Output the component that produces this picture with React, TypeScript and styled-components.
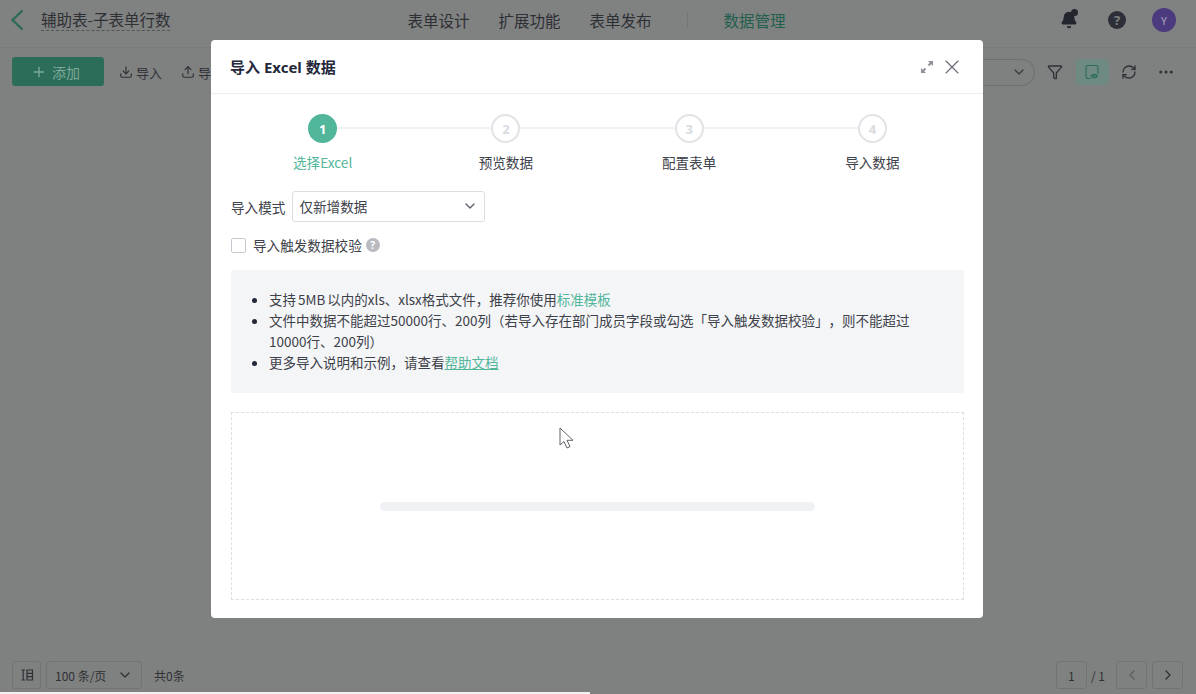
import React from 'react';
import styled, { createGlobalStyle } from 'styled-components';
import { ChevronLeft, ChevronRight, ChevronDown, Plus, Download, Upload, X, Filter, RefreshCw, MoreHorizontal, Bell } from 'lucide-react';

const FONT = `"Noto Sans CJK SC", "Noto Sans", sans-serif`;
const Global = createGlobalStyle`
  html, body { margin: 0; padding: 0; height: 100%; overflow: hidden; }
  body { font-family: ${FONT}; color: #2a2f3c; font-size: 14px; text-spacing-trim: space-all; }
  #root { height: 100%; }
  * { box-sizing: border-box; }
`;

const Page = styled.div`
  position: relative; width: 1196px; height: 694px; overflow: hidden;
  display: flex; flex-direction: column; background: #7f8080;
`;
const Header = styled.header`
  height: 48px; flex: none; display: flex; align-items: center; padding: 0 20px 8px 10px;
  border-bottom: 1px solid #7a7b7b; background: #808181;
`;
const Back = styled.span`color: #2c6b58; display: flex; margin-right: 17px;`;
const Title = styled.span`font-size: 15.5px; line-height: 22px; color: #2f3034; border-bottom: 1px dashed #545555; flex: none;`;
const Nav = styled.nav`flex: 1; display: flex; align-items: center; padding-left: 237px; gap: 29px;`;
const NavItem = styled.span<{ $active?: boolean }>`font-size: 15.5px; color: ${p => p.$active ? '#235f4d' : '#2d2f34'};`;
const NavSep = styled.span`width: 1px; height: 16px; background: #747575; margin: 0 6px 0 7px;`;
const HeaderIcons = styled.div`display: flex; align-items: center; gap: 26px;`;
const Avatar = styled.span`width: 24px; height: 24px; border-radius: 50%; background: #4a3a7e; color: #a9a3bf; font-size: 11px; display: flex; align-items: center; justify-content: center;`;
const BellWrap = styled.span`position: relative; display: flex; margin-right: 4px; &::after { content: ''; position: absolute; right: 0; top: -2px; width: 7px; height: 7px; border-radius: 50%; background: #23262e; }`;
const HelpDot = styled.span`width: 18px; height: 18px; border-radius: 50%; background: #2c2f38; color: #808181; font-size: 13px; font-weight: 700; display: flex; align-items: center; justify-content: center; font-family: "Noto Sans", sans-serif;`;

const Toolbar = styled.div`height: 48px; flex: none; display: flex; align-items: center; padding: 0 13.5px 0 12px;`;
const AddButton = styled.span`width: 92px; height: 29px; margin-top: -1px; border-radius: 3px; background: #2b6d59; color: #7ea99b; display: flex; align-items: center; justify-content: center; gap: 5px; font-size: 14px; margin-right: 15px; padding-right: 5px;`;
const ToolAction = styled.span`display: flex; align-items: center; gap: 3px; font-size: 13px; color: #2f3136; margin-right: 19px;`;
const Spacer = styled.div`flex: 1;`;
const ViewSelect = styled.span`width: 60px; height: 27px; border: 1px solid #6f7070; border-left: none; border-radius: 0 14px 14px 0; display: flex; align-items: center; justify-content: flex-end; padding-right: 7px; color: #3b3d42; margin-right: 3.5px;`;
const ToolIcon = styled.span<{ $active?: boolean }>`width: 33px; height: 26px; border-radius: 3px; display: flex; align-items: center; justify-content: center; color: #2f3136; background: ${p => p.$active ? '#6f8a82' : 'transparent'};`;
const ToolIcons = styled.div`display: flex; align-items: center; gap: 4px;`;

const Body = styled.main`flex: 1;`;
const Footer = styled.footer`height: 36px; flex: none; display: flex; align-items: center; padding: 2px 13px 0 12px; font-size: 12px; color: #303236;`;
const PageBox = styled.span`height: 28px; border: 1px solid #727373; border-radius: 3px; display: flex; align-items: center; justify-content: center; color: #2f3136;`;
const ColsBox = styled(PageBox)`width: 29px; margin-right: 5px;`;
const SizeBox = styled(PageBox)`width: 96px; justify-content: space-between; padding: 0 8px; margin-right: 12px;`;
const NumBox = styled(PageBox)`width: 31px;`;
const NavBox = styled(PageBox)`width: 31px; margin-left: 5px;`;
const PageTotal = styled.span`margin: 0 6px 0 4px;`;
const BottomStrip = styled.div`width: 590px; height: 2px; flex: none; background: #f1f1f1;`;

const Modal = styled.section`
  position: absolute; left: 211px; top: 40px; width: 772px; height: 578px; background: #fff;
  border-radius: 4px; display: flex; flex-direction: column;
`;
const ModalHead = styled.div`height: 54px; flex: none; border-bottom: 1px solid #eceef1; display: flex; align-items: center; padding: 0 19px 0 19px;`;
const ModalTitle = styled.h2`flex: 1; margin: 0; font-size: 15px; font-weight: 700; color: #23283a; font-family: "Noto Sans", "Noto Sans CJK SC", sans-serif;`;
const ModalActions = styled.div`display: flex; align-items: center; gap: 6px; color: #646873;`;
const ModalBody = styled.div`flex: 1; padding: 20px 19px 18px 20px; display: flex; flex-direction: column;`;

const Steps = styled.ol`display: grid; grid-template-columns: repeat(4, 1fr); margin: 0; padding: 0; list-style: none;`;
const Step = styled.li<{ $first?: boolean; $last?: boolean }>`
  position: relative; display: flex; flex-direction: column; align-items: center;
  &::before { content: ''; position: absolute; top: 13px; height: 2px; background: #f0f1f3;
    left: ${p => p.$first ? '50%' : '0'}; right: ${p => p.$last ? '50%' : '0'}; }
`;
const StepDot = styled.span<{ $active?: boolean }>`
  position: relative; width: 29px; height: 29px; border-radius: 50%; display: flex; align-items: center; justify-content: center;
  font-size: 13px; font-weight: 700; font-family: "Noto Sans", sans-serif;
  background: ${p => p.$active ? '#52b69a' : '#fff'}; color: ${p => p.$active ? '#fff' : '#d9dbe0'};
  border: 2px solid ${p => p.$active ? '#52b69a' : '#e1e3e7'};
`;
const StepLabel = styled.span<{ $active?: boolean }>`margin-top: 9px; font-size: 13.6px; line-height: 20px; color: ${p => p.$active ? '#52b69a' : '#3d4149'};`;

const ModeRow = styled.div`display: flex; align-items: center; margin-top: 19px; gap: 7px; font-size: 13.6px; color: #3d4149;`;
const Select = styled.div`width: 193px; height: 31px; border: 1px solid #dcdee3; border-radius: 3px; display: flex; align-items: center; justify-content: space-between; padding: 0 6px 2px; color: #3d4149; font-size: 13.6px;`;
const CheckRow = styled.label`display: flex; align-items: center; margin-top: 15px; height: 18px; padding-bottom: 2px; font-size: 13.6px; color: #3d4149;`;
const CheckBox = styled.span`width: 15px; height: 15px; border: 1px solid #c6c9cf; border-radius: 2px; margin-right: 7px;`;
const Hint = styled.span`width: 14px; height: 14px; border-radius: 50%; background: #b9bbc0; color: #fff; font-size: 10px; font-weight: 700; display: flex; align-items: center; justify-content: center; margin-left: 4px; font-family: "Noto Sans", sans-serif;`;

const InfoBox = styled.div`margin-top: 15px; height: 123px; background: #f4f5f7; border-radius: 2px; padding: 19px 20px 0 0;`;
const InfoList = styled.ul`margin: 0; padding: 0 0 0 38px; font-size: 13.5px; word-spacing: -1px; line-height: 21px; color: #3d4149; & li::marker { color: #23283a; }`;
const LinkText = styled.a<{ $underline?: boolean }>`color: #52b69a; text-decoration: ${p => p.$underline ? 'underline' : 'none'};`;

const DropZone = styled.div`flex: 1; margin-top: 19px; border: 1px dashed #dcdee3; display: flex; align-items: center; justify-content: center; position: relative;`;
const Progress = styled.div`width: 435px; height: 9px; border-radius: 5px; background: #f0f1f4;`;
const Cursor = styled.svg`position: absolute; left: 327px; top: 14px;`;

export default function App() {
  return (
    <Page>
      <Global />
      <Header>
        <Back>
          <svg width="14" height="22" viewBox="0 0 14 22" fill="none" stroke="currentColor" strokeWidth="2.3">
            <path d="M12.5 1.5 2.5 11l10 9.5" />
          </svg>
        </Back>
        <Title>辅助表-子表单行数</Title>
        <Nav>
          <NavItem>表单设计</NavItem>
          <NavItem>扩展功能</NavItem>
          <NavItem>表单发布</NavItem>
          <NavSep />
          <NavItem $active>数据管理</NavItem>
        </Nav>
        <HeaderIcons>
          <BellWrap><Bell size={18} fill="#23262e" color="#23262e" /></BellWrap>
          <HelpDot>?</HelpDot>
          <Avatar>Y</Avatar>
        </HeaderIcons>
      </Header>
      <Toolbar>
        <AddButton><Plus size={16} />添加</AddButton>
        <ToolAction><Download size={14} />导入</ToolAction>
        <ToolAction><Upload size={14} />导出</ToolAction>
        <Spacer />
        <ViewSelect><ChevronDown size={16} /></ViewSelect>
        <ToolIcons>
          <ToolIcon><Filter size={16} /></ToolIcon>
          <ToolIcon $active>
            <svg width="16" height="16" viewBox="0 0 16 16" fill="none" stroke="#2b6d59" strokeWidth="1.1">
              <path d="M2 12.5V3a1.5 1.5 0 0 1 1.5-1.5h9A1.5 1.5 0 0 1 14 3v7" />
              <path d="M2 12.5a2 2 0 0 0 2 2h2.5" />
              <path d="M7 12.2c.9-1.2 2-1.8 3.2-1.8s2.3.6 3.3 1.8c-1 1.2-2.1 1.8-3.3 1.8S7.900 13.400 7 12.200z" />
              <circle cx="10.200" cy="12.200" r=".5" />
            </svg>
          </ToolIcon>
          <ToolIcon><RefreshCw size={16} /></ToolIcon>
          <ToolIcon><MoreHorizontal size={18} /></ToolIcon>
        </ToolIcons>
      </Toolbar>
      <Body />
      <Footer>
        <ColsBox>
          <svg width="14" height="14" viewBox="0 0 14 14" fill="none" stroke="#2f3136" strokeWidth="1.2">
            <path d="M1.500 2h3.500M3.200 2v10M1.500 12h3.500M7 2h5.500v10H7zM7 5.300h5.500M7 8.600h5.500" />
          </svg>
        </ColsBox>
        <SizeBox>100 条/页<ChevronDown size={16} /></SizeBox>
        <span>共0条</span>
        <Spacer />
        <NumBox>1</NumBox>
        <PageTotal>/ 1</PageTotal>
        <NavBox><ChevronLeft size={16} color="#5d5f63" /></NavBox>
        <NavBox><ChevronRight size={16} /></NavBox>
      </Footer>
      <BottomStrip />

      <Modal>
        <ModalHead>
          <ModalTitle>导入 Excel 数据</ModalTitle>
          <ModalActions>
            <svg width="14" height="14" viewBox="0 0 14 14" fill="#8e9199">
              <path d="M8 1h5v5l-1.800-1.800-2 2-1.400-1.400 2-2zM6 13H1V8l1.800 1.800 2-2 1.400 1.400-2 2z" />
            </svg>
            <X size={24} strokeWidth={1.1} />
          </ModalActions>
        </ModalHead>
        <ModalBody>
          <Steps>
            <Step $first><StepDot $active>1</StepDot><StepLabel $active>选择Excel</StepLabel></Step>
            <Step><StepDot>2</StepDot><StepLabel>预览数据</StepLabel></Step>
            <Step><StepDot>3</StepDot><StepLabel>配置表单</StepLabel></Step>
            <Step $last><StepDot>4</StepDot><StepLabel>导入数据</StepLabel></Step>
          </Steps>
          <ModeRow>
            导入模式
            <Select>仅新增数据<ChevronDown size={16} color="#5c606a" /></Select>
          </ModeRow>
          <CheckRow><CheckBox />导入触发数据校验<Hint>?</Hint></CheckRow>
          <InfoBox>
            <InfoList>
              <li>支持 5MB 以内的xls、xlsx格式文件，推荐你使用<LinkText>标准模板</LinkText></li>
              <li>文件中数据不能超过50000行、200列（若导入存在部门成员字段或勾选「导入触发数据校验」，则不能超过10000行、200列）</li>
              <li>更多导入说明和示例，请查看<LinkText $underline>帮助文档</LinkText></li>
            </InfoList>
          </InfoBox>
          <DropZone>
            <Progress />
            <Cursor width="16" height="24" viewBox="0 0 16 24" fill="#fff" stroke="#5f6369" strokeWidth="1">
              <path d="M1 1v17l4-3.500 3 6.500 3-1.400-3-6.300h6z" />
            </Cursor>
          </DropZone>
        </ModalBody>
      </Modal>
    </Page>
  );
}
